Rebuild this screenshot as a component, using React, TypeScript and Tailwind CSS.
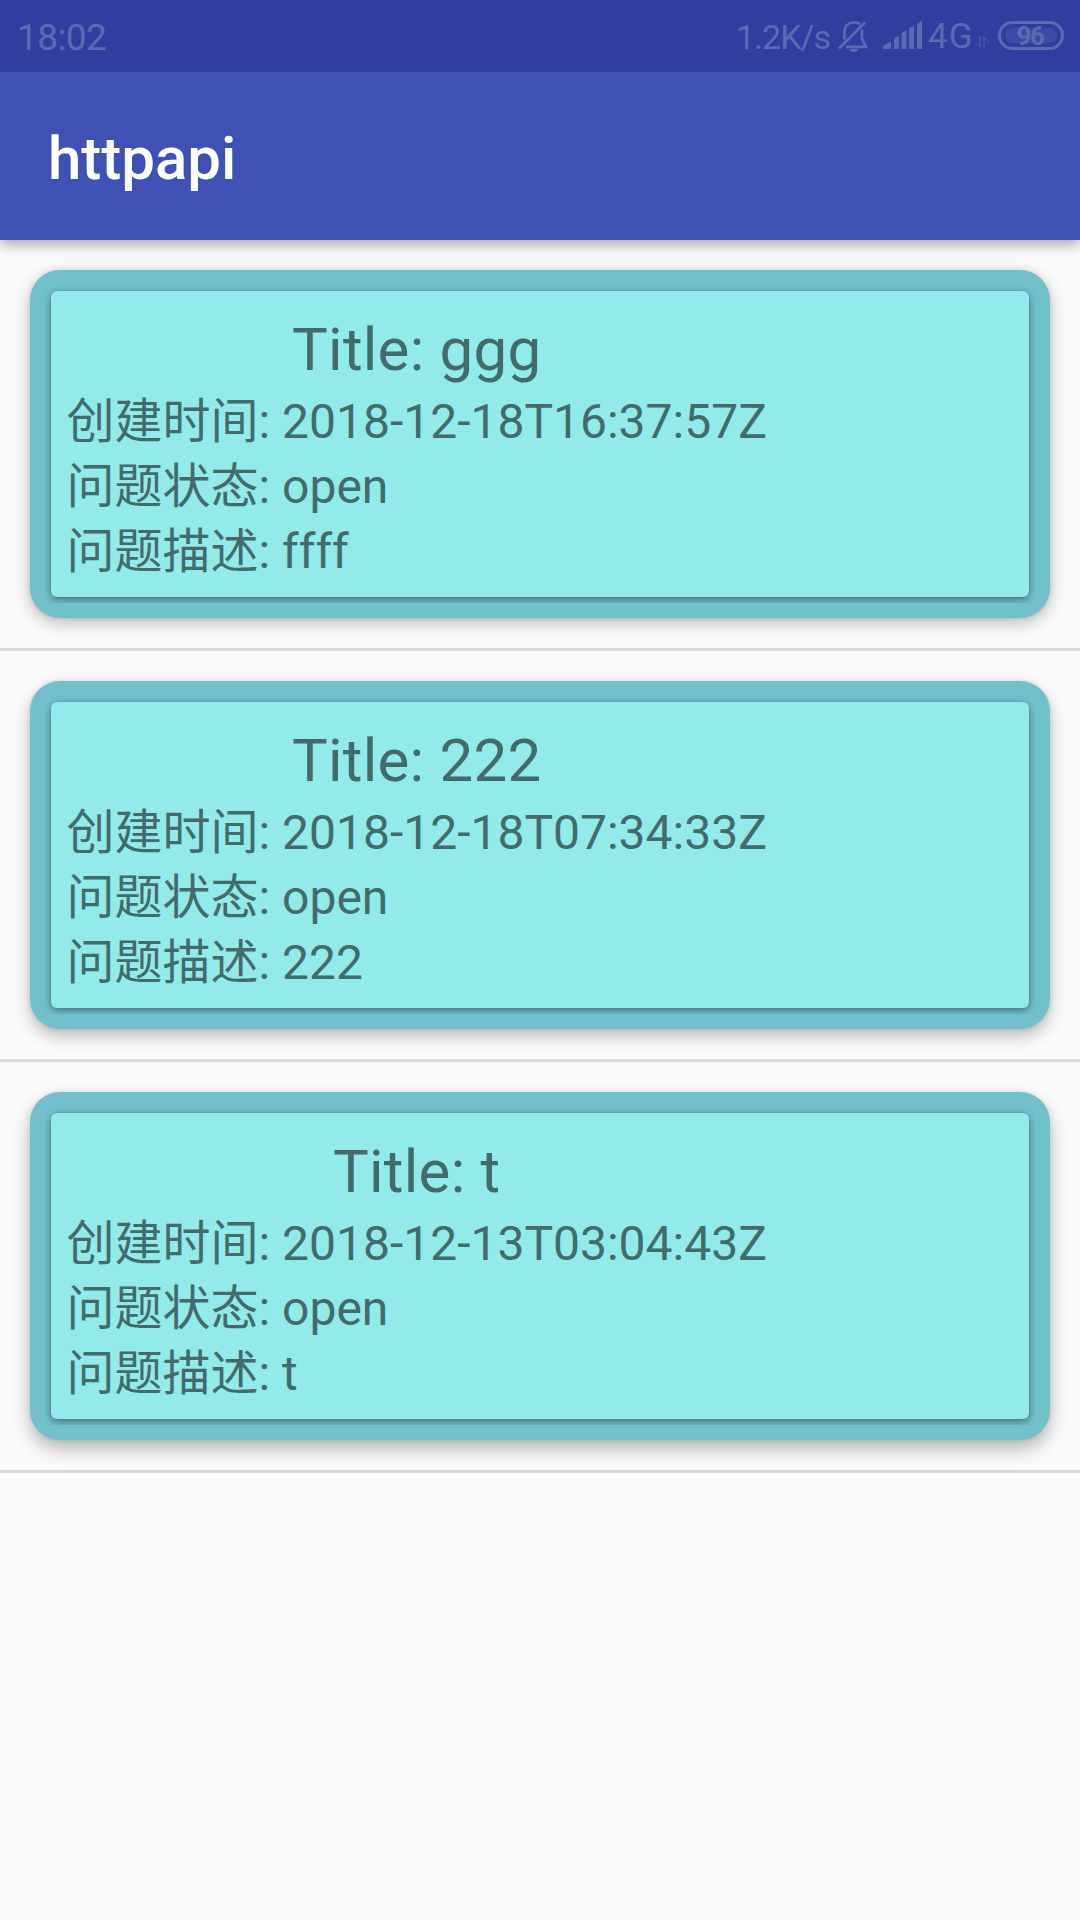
type Issue = { title: string; created: string; status: string; description: string; elevation: string };

const issues: Issue[] = [
  {
    title: 'ggg',
    created: '2018-12-18T16:37:57Z',
    status: 'open',
    description: 'ffff',
    elevation: 'shadow-[0_5px_16px_rgba(0,0,0,0.25),0_0_4px_rgba(0,0,0,0.1)]',
  },
  {
    title: '222',
    created: '2018-12-18T07:34:33Z',
    status: 'open',
    description: '222',
    elevation: 'shadow-[0_7px_16px_rgba(0,0,0,0.26),0_0_4px_rgba(0,0,0,0.1)]',
  },
  {
    title: 't',
    created: '2018-12-13T03:04:43Z',
    status: 'open',
    description: 't',
    elevation: 'shadow-[0_9px_18px_rgba(0,0,0,0.27),0_0_4px_rgba(0,0,0,0.1)]',
  },
];

function StatusBar() {
  return (
    <div className="relative z-10 flex h-[72px] items-start bg-[#303f9f] pl-[17px] text-[#5d69b3]">
      <span className="mt-[16px] text-[37px] leading-[44px] tracking-[-0.6px]">18:02</span>
      <span className="ml-auto mt-[15px] w-[99px] whitespace-nowrap text-[34px] leading-[44px] tracking-[-1px]">1.2K/s</span>
      <svg className="ml-[3px] mt-[20px]" width="32" height="32" viewBox="0 0 32 32" fill="none" stroke="currentColor" strokeWidth="2.7">
        <path d="M1 28.5L27 2.5" />
        <path d="M6.5 19.5V12.5C6.5 6 10.5 2.9 15 2.5C18 2.2 20.5 3 22 4.4" />
        <path d="M24 9.5V19L28 26.8H8" />
        <path d="M11 29H20.5C19.5 31 18 32 15.8 32S12 31 11 29Z" fill="currentColor" stroke="none" />
      </svg>
      <svg className="ml-[13px] mt-[21px]" width="40" height="29" viewBox="0 0 40 29" fill="currentColor">
        <path d="M0 28V25L8 20.5V28Z" />
        <path d="M11 28V17.5L16 14.5V28Z" />
        <path d="M18.5 28V12L23.5 9V28Z" />
        <path d="M26 28V7.5L31 4.5V28Z" />
        <path d="M34 28V3L39 0V28Z" />
      </svg>
      <span className="ml-[5px] mt-[15px] w-[48px] text-[35px] leading-[44px] tracking-[1px]">4G</span>
      <svg className="mt-[36px] text-[#4652a9]" width="13" height="13" viewBox="0 0 13 13" fill="none" stroke="currentColor" strokeWidth="1.8">
        <path d="M4 0V11L0.5 7.5" />
        <path d="M8 12V1.5L11.7 5.5" />
      </svg>
      <div className="ml-[9px] mr-[16px] mt-[21px] flex h-[29px] w-[66px] rounded-full border-[3px] border-current p-[4px]">
        <div className="flex flex-1 items-center justify-center rounded-[8px] bg-[#3e4ba5] pr-[2px] text-[26px] font-bold leading-[20px] tracking-[-1.5px]">
          96
        </div>
      </div>
    </div>
  );
}

function IssueCard({ issue }: { issue: Issue }) {
  return (
    <li className="border-b-[3px] border-[#dadada] p-[30px]">
      <article className={`rounded-[30px] bg-[#73c0cd] p-[15px] ${issue.elevation}`}>
        <div className="overflow-hidden p-[6px]">
          <div className="h-[306px] rounded-[6px] bg-[#92eaea] px-[15.5px] pt-[24px] shadow-[0_3px_9px_rgba(0,0,0,0.38),0_0_3px_rgba(0,0,0,0.12)]">
            <div className="flex w-fit flex-col whitespace-nowrap text-[48px] leading-[65px] text-[#446b6b]">
              <h2 className="h-[74px] self-center text-[60px] leading-[70px] tracking-[0.25px]">Title: {issue.title}</h2>
              <p>创建时间: {issue.created}</p>
              <p>问题状态: {issue.status}</p>
              <p>问题描述: {issue.description}</p>
            </div>
          </div>
        </div>
      </article>
    </li>
  );
}

export default function App() {
  return (
    <div className="min-h-[1920px] w-[1080px] overflow-hidden bg-[#fafafa] font-['Roboto','Noto_Sans_CJK_SC',sans-serif]">
      <StatusBar />
      <header className="relative flex h-[168px] items-center bg-[#3f51b5] px-[48px] pt-[5px] shadow-[0_5px_12px_rgba(0,0,0,0.32)]">
        <h1 className="text-[60px] font-medium leading-[70px] text-white">httpapi</h1>
      </header>
      <ul>
        {issues.map((issue) => (
          <IssueCard key={issue.created} issue={issue} />
        ))}
      </ul>
    </div>
  );
}
